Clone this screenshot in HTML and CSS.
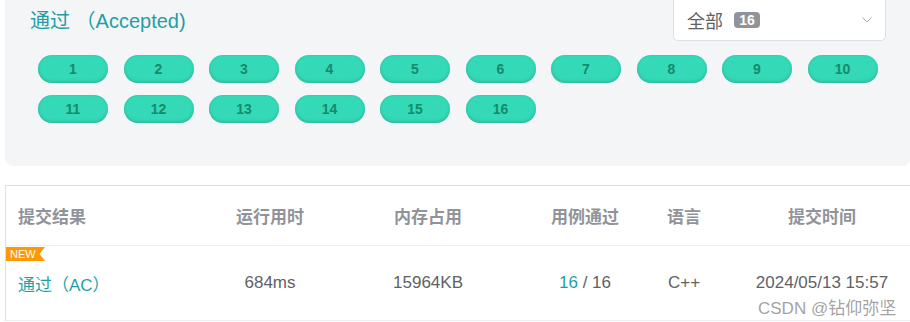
FILE: index.html
```html
<!DOCTYPE html>
<html lang="zh">
<head>
<meta charset="utf-8">
<link rel="stylesheet" href="styles.css">
</head>
<body>
<div class="page">
  <div class="panel">
    <div class="panel-head">
      <div class="title">通过 （Accepted)</div>
      <div class="select">
        <span class="select-label">全部</span>
        <span class="badge">16</span>
        <svg class="chev" width="10" height="6" viewBox="0 0 10 6"><path d="M0.5 0.5 L5 5 L9.5 0.5" fill="none" stroke="#a8abb2" stroke-width="1"/></svg>
      </div>
    </div>
    <div class="cases">
      <span class="case">1</span><span class="case">2</span><span class="case">3</span><span class="case">4</span><span class="case">5</span>
      <span class="case">6</span><span class="case">7</span><span class="case">8</span><span class="case">9</span><span class="case">10</span>
      <span class="case">11</span><span class="case">12</span><span class="case">13</span><span class="case">14</span><span class="case">15</span>
      <span class="case">16</span>
    </div>
  </div>

  <div class="table">
    <div class="row head">
      <div class="cell first">提交结果</div>
      <div class="cell">运行用时</div>
      <div class="cell">内存占用</div>
      <div class="cell">用例通过</div>
      <div class="cell">语言</div>
      <div class="cell">提交时间</div>
    </div>
    <div class="row data">
      <span class="new">NEW</span>
      <div class="cell first accent">通过（AC）</div>
      <div class="cell">684ms</div>
      <div class="cell">15964KB</div>
      <div class="cell"><span class="accent">16</span>&nbsp;/ 16</div>
      <div class="cell">C++</div>
      <div class="cell">2024/05/13 15:57</div>
      <span class="watermark">CSDN @钻仰弥坚</span>
    </div>
  </div>
</div>
</body>
</html>
```
FILE: styles.css
```css
* { box-sizing: border-box; }
html, body { margin: 0; padding: 0; background: #fff; }
body {
  font-family: "Liberation Sans", "Noto Sans CJK SC", sans-serif;
  overflow: hidden;
}
.page {
  width: 910px;
  height: 322px;
  overflow: hidden;
}
.panel {
  margin-left: 5px;
  width: 905px;
  height: 166px;
  background: #f4f5f7;
  border-radius: 0 0 8px 8px;
}
.panel-head {
  display: flex;
  justify-content: space-between;
  align-items: center;
  height: 41px;
  padding-left: 25px;
  padding-right: 24px;
}
.title {
  font-size: 20px;
  color: #1f9fa5;
  line-height: 24px;
}
.select {
  width: 213px;
  height: 41px;
  background: #fff;
  border: 1px solid #dcdfe6;
  border-top: none;
  border-radius: 0 0 5px 5px;
  display: flex;
  align-items: center;
  padding-left: 13px;
  padding-right: 13px;
}
.select-label {
  font-size: 18px;
  color: #606266;
}
.badge {
  margin-left: 11px;
  width: 26px;
  height: 16px;
  border-radius: 4px;
  background: #909399;
  color: #fff;
  font-size: 14px;
  font-weight: bold;
  line-height: 16px;
  text-align: center;
}
.chev { margin-left: auto; }
.cases {
  display: grid;
  grid-template-columns: repeat(10, 70px);
  column-gap: 15.5px;
  row-gap: 12px;
  padding-left: 33px;
  margin-top: 14px;
}
.case {
  height: 28px;
  border-radius: 14px;
  background: #34d9b7;
  box-shadow: inset 0 -2px 3px rgba(40, 150, 130, 0.35), inset 0 0 2px rgba(40, 150, 130, 0.3);
  color: #168a6b;
  font-size: 14px;
  font-weight: bold;
  display: flex;
  align-items: center;
  justify-content: center;
}
.table {
  margin-top: 19px;
  margin-left: 5px;
  width: 925px;
  border-top: 1px solid #dcdfe6;
  border-left: 1px solid #dcdfe6;
}
.row {
  display: grid;
  grid-template-columns: 194px 140px 176px 138px 60px 216px;
  align-items: center;
  position: relative;
  border-bottom: 1px solid #ebeef5;
}
.row.head { height: 60px; }
.row.data { height: 75px; }
.cell {
  text-align: center;
  font-size: 17px;
  color: #606266;
  white-space: nowrap;
}
.head .cell {
  font-weight: bold;
  color: #909399;
}
.cell.first {
  text-align: left;
  padding-left: 12px;
}
.accent { color: #1f9fa5; }
.new {
  position: absolute;
  left: 0;
  top: 1px;
  width: 39px;
  height: 14px;
  background: #ff9800;
  color: #fff;
  font-size: 11px;
  line-height: 14px;
  padding-left: 4px;
  clip-path: polygon(0 0, 100% 0, 86% 50%, 100% 100%, 0 100%);
}
.watermark {
  position: absolute;
  left: 752px;
  top: 48px;
  font-size: 17px;
  color: rgba(120, 120, 120, 0.7);
  white-space: nowrap;
}
```
